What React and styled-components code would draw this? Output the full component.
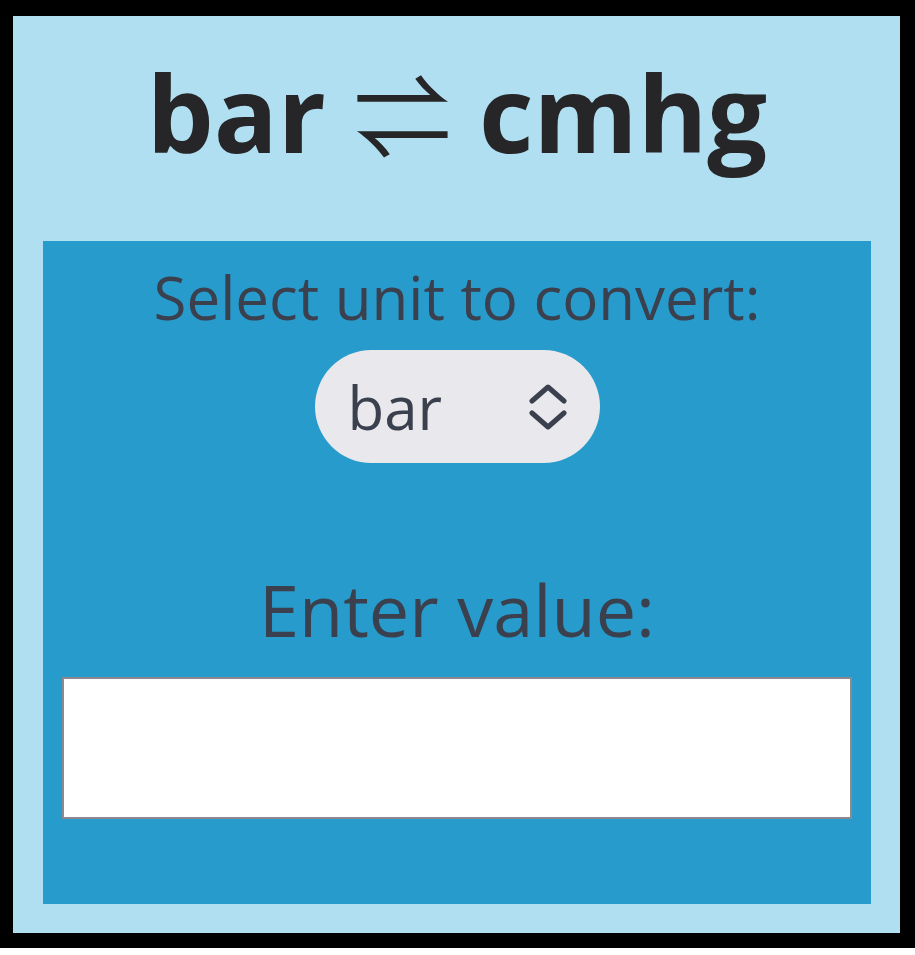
import React, { useState } from "react";
import styled, { createGlobalStyle } from "styled-components";

const GlobalStyle = createGlobalStyle`
  html, body {
    margin: 0;
    padding: 0;
    background: #ffffff;
  }
  body {
    font-family: "Open Sans", "DejaVu Sans", sans-serif;
  }
`;

const Frame = styled.div`
  width: 915px;
  height: 948px;
  box-sizing: border-box;
  border-style: solid;
  border-color: #000;
  border-width: 16px 15px 15px 13px;
  background: #b0dff2;
  display: flex;
  flex-direction: column;
  padding: 0 29px 29px 30px;
`;

const Header = styled.header`
  height: 225px;
  display: flex;
  align-items: center;
  justify-content: center;
`;

const Title = styled.h1`
  margin: 0;
  font-size: 106px;
  font-weight: 700;
  color: #262629;
  line-height: 1;
  padding-bottom: 34px;
`;

const Arrows = styled.span`
  font-family: "Noto Sans CJK JP", "DejaVu Sans", sans-serif;
  font-weight: 400;
  font-size: 98px;
`;

const Panel = styled.main`
  flex: 1;
  background: #279bcb;
  display: flex;
  flex-direction: column;
  align-items: center;
  padding: 16px 19px 0;
`;

const Label = styled.label`
  font-size: ${(p) => p.size}px;
  color: #3b404e;
  line-height: 1.35;
  margin-top: ${(p) => p.top || 0}px;
`;

const SelectWrap = styled.div`
  position: relative;
  margin-top: 12px;
`;

const Select = styled.select`
  appearance: none;
  -webkit-appearance: none;
  width: 285px;
  height: 113px;
  border: none;
  border-radius: 57px;
  background: #e9e9ed;
  color: #3b404e;
  font-family: "Open Sans", sans-serif;
  font-size: 60px;
  padding: 0 0 0 33px;
  outline: none;
`;

const Chevrons = styled.svg`
  position: absolute;
  right: 32px;
  top: 34px;
  pointer-events: none;
`;

const Input = styled.input`
  width: 100%;
  height: 142px;
  box-sizing: border-box;
  margin-top: 19px;
  border: 2px solid #8a8a8f;
  background: #fff;
  font-size: 48px;
  font-family: "Open Sans", sans-serif;
  padding: 0 16px;
  outline: none;
`;

export default function App() {
  const [unit, setUnit] = useState("bar");
  const [value, setValue] = useState("");

  return (
    <>
      <GlobalStyle />
      <Frame>
        <Header>
          <Title>
            bar <Arrows>⇌</Arrows> cmhg
          </Title>
        </Header>
        <Panel>
          <Label size={60} htmlFor="unit">
            Select unit to convert:
          </Label>
          <SelectWrap>
            <Select id="unit" value={unit} onChange={(e) => setUnit(e.target.value)}>
              <option value="bar">bar</option>
              <option value="cmhg">cmhg</option>
            </Select>
            <Chevrons width="40" height="46" viewBox="0 0 40 46">
              <path
                d="M4 17 L20 3 L36 17 M4 29 L20 43 L36 29"
                fill="none"
                stroke="#3b404e"
                strokeWidth="5"
                strokeLinecap="round"
                strokeLinejoin="round"
              />
            </Chevrons>
          </SelectWrap>
          <Label size={72} top={98} htmlFor="value">
            Enter value:
          </Label>
          <Input id="value" type="text" value={value} onChange={(e) => setValue(e.target.value)} />
        </Panel>
      </Frame>
    </>
  );
}
